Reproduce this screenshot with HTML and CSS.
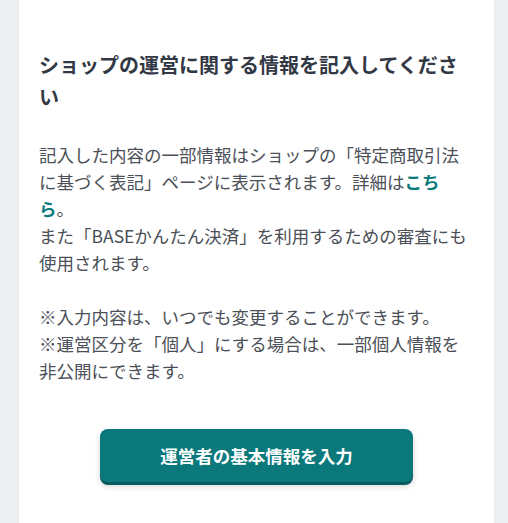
FILE: index.html
```html
<!DOCTYPE html>
<html lang="ja">
<head>
<meta charset="utf-8">
<link rel="stylesheet" href="styles.css">
</head>
<body>
<div class="page">
  <section class="card">
    <h2 class="title">ショップの運営に関する情報を記入してください</h2>
    <p class="desc">記入した内容の一部情報はショップの「特定商取引法に基づく表記」ページに表示されます。詳細は<a class="link" href="#">こちら</a>。<br>また「BASEかんたん決済」を利用するための審査にも使用されます。<br><br>※入力内容は、いつでも変更することができます。<br>※運営区分を「個人」にする場合は、一部個人情報を非公開にできます。</p>
    <div class="actions">
      <button class="btn" type="button">運営者の基本情報を入力</button>
    </div>
  </section>
</div>
</body>
</html>
```
FILE: styles.css
```css
html, body {
  margin: 0;
  padding: 0;
  background: #eceef2;
  height: 100%;
}
body {
  font-family: "Noto Sans CJK JP", "Noto Sans", sans-serif;
}
.page {
  padding: 0 14px 0 19px;
  height: 100%;
}
.card {
  background: #ffffff;
  min-height: 100%;
  padding: 49px 20px 40px 20px;
  box-sizing: border-box;
}
.title {
  margin: 0;
  font-size: 20px;
  line-height: 32px;
  font-weight: 700;
  color: #333845;
}
.desc {
  margin: 28px 0 0 0;
  font-size: 17.5px;
  line-height: 27px;
  color: #4b4f57;
}
.link {
  color: #0b7a7d;
  font-weight: 700;
  text-decoration: none;
}
.actions {
  display: flex;
  justify-content: center;
  margin-top: 45px;
}
.btn {
  width: 313px;
  height: 53px;
  border: none;
  border-radius: 8px;
  background: #0b787c;
  color: #ffffff;
  font-family: "Noto Sans CJK JP", "Noto Sans", sans-serif;
  font-size: 17.5px;
  font-weight: 700;
  box-shadow: 0 3px 0 #065d60, 0 4px 6px rgba(0,0,0,0.18);
  cursor: pointer;
}
```
